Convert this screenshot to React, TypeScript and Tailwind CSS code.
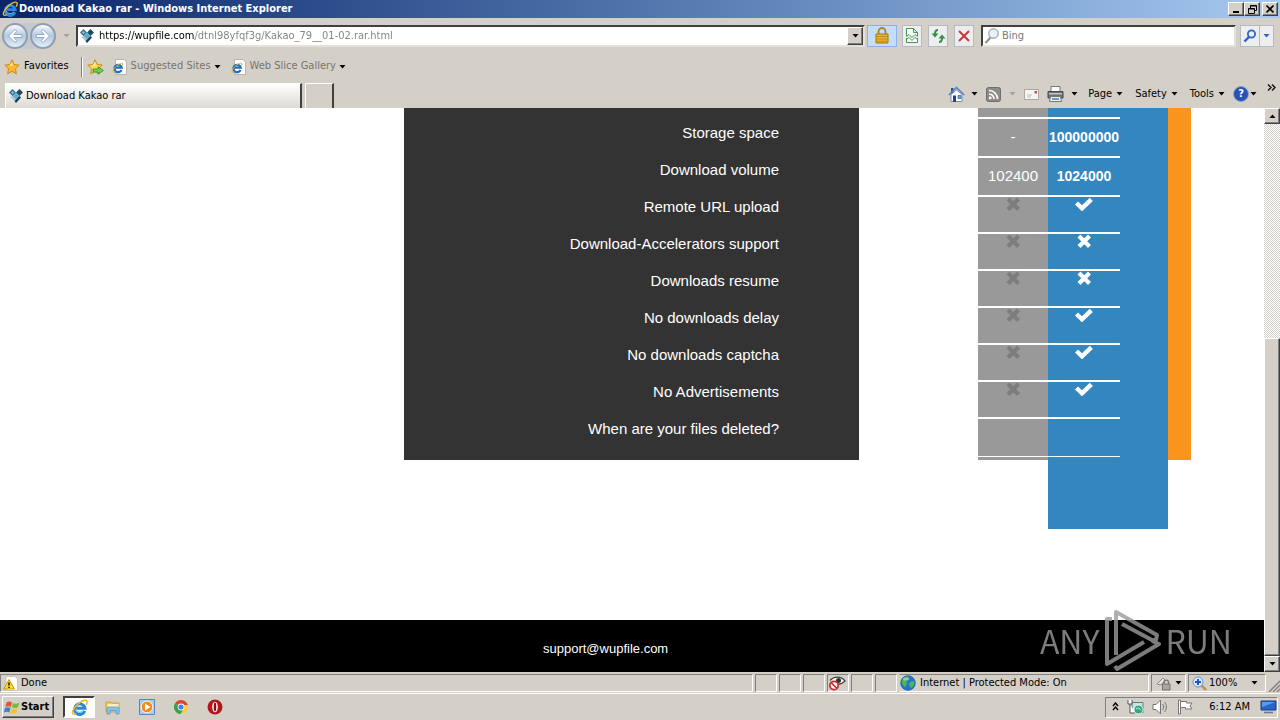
import React, { useState } from "react";

interface PlanRow {
  label: string;
  free: string | boolean;
  premium: string | boolean;
}

const rows: PlanRow[] = [
  { label: "Storage space", free: "-", premium: "100000000" },
  { label: "Download volume", free: "102400", premium: "1024000" },
  { label: "Remote URL upload", free: false, premium: true },
  { label: "Download-Accelerators support", free: false, premium: false },
  { label: "Downloads resume", free: false, premium: false },
  { label: "No downloads delay", free: false, premium: true },
  { label: "No downloads captcha", free: false, premium: true },
  { label: "No Advertisements", free: false, premium: true },
  { label: "When are your files deleted?", free: "", premium: "" },
];

const raised =
  "border border-t-white border-l-white border-r-[#404040] border-b-[#404040] bg-[#d4d0c8] shadow-[inset_-1px_-1px_0_#808080]";
const sunken =
  "border border-t-[#808080] border-l-[#808080] border-r-white border-b-white";

function IeIcon({ size = 16 }: { size?: number }) {
  return (
    <svg width={size} height={size} viewBox="0 0 16 16" fill="none">
      <path
        d="M13 11.2A5 5 0 1 1 13.2 8.6H5"
        stroke="#2b86dc"
        strokeWidth="2.8"
      />
      <path
        d="M12 10.5A4.6 4.6 0 0 1 4 10"
        stroke="#6cc4f6"
        strokeWidth="1"
      />
      <path
        d="M14.2 5.6C15.8 2.6 15.6.9 13.2 1.1 9.4 1.4 3.4 6.8 1.6 11.4.8 13.900 1.900 15.200 4.800 13.700"
        stroke="#f0b822"
        strokeWidth="1.4"
      />
    </svg>
  );
}

function IePage() {
  return (
    <svg width="16" height="16" viewBox="0 0 16 16" fill="none">
      <path d="M3.5.5H12l2.500 2.500v12.500h-11z" fill="#fff" stroke="#b9b5ab" />
      <path
        d="M9.500 11A3.700 3.700 0 1 1 9.700 8.600H3.500"
        stroke="#1c6fc4"
        strokeWidth="2.2"
      />
      <path d="M10.500 6.500c1-2.500 0-2.800-2-2C5 6 1.500 9.500 1 12c0 1.500 1 1.500 2.500 1" stroke="#e8b32a" />
    </svg>
  );
}

// wupfile diamond mark
function SiteIcon() {
  return (
    <svg width="16" height="16" viewBox="0 0 16 16">
      <path d="M4.500 1 8 4.500 4.500 8 1 4.500z" fill="#35718f" />
      <path d="M11.500 1 15 4.500 11.500 8 8 4.500z" fill="#1f4a63" />
      <path d="M8 4.500 11.500 8 8 11.500 4.500 8z" fill="#5bb0d0" />
      <path d="M4.500 8 8 11.500 6.500 13 2.500 9z" fill="#a9c4d2" />
      <path d="M11.500 8 13 9.500 8 15 6.500 13z" fill="#173b52" />
      <path d="M4.500 3 6 4.500 4.500 6 3 4.500z" fill="#9fc6d8" />
    </svg>
  );
}

function Caret({ className = "text-black" }: { className?: string }) {
  return (
    <svg width="7" height="4" viewBox="0 0 7 4" className={`shrink-0 ${className}`}>
      <path d="M.5 0h6L3.500 3.500z" fill="currentColor" />
    </svg>
  );
}

function Star({ add = false }: { add?: boolean }) {
  return (
    <svg width="17" height="16" viewBox="0 0 17 16">
      <path
        d="m8 .8 2.100 4.700 5.100.6-3.700 3.500.9 5.200L8 12.300l-4.400 2.500.9-5.200L.8 6.100l5.100-.6z"
        fill={add ? "#f8dc5a" : "#fbb62c"}
        stroke="#cf8a12"
      />
      <path d="M8 3 9 6.500 5 7z" fill="#ffeaa0" />
      {add && (
        <path
          d="M6 10h5V7.800l5.300 3.700-5.300 3.700V13H6z"
          fill="#67d64b"
          stroke="#2c8a1d"
          strokeWidth=".8"
        />
      )}
    </svg>
  );
}

function NavCircle({ forward = false }: { forward?: boolean }) {
  return (
    <button
      aria-label={forward ? "Forward" : "Back"}
      className="flex size-[26px] items-center justify-center rounded-full border-2 border-[#8f9dae] bg-linear-to-b from-[#f6f9fc] via-[#b4c8df] to-[#e3f0fb]"
    >
      <svg
        width="16"
        height="16"
        viewBox="0 0 16 16"
        className={forward ? "rotate-180" : ""}
      >
        <path
          d="M8 1.500 1.500 8 8 14.500l1.800-1.900L6.800 9.500h8v-3h-8l3-3.100z"
          fill="#fff"
          stroke="#8aa3c2"
          strokeWidth=".9"
        />
      </svg>
    </button>
  );
}

function Mark({ on, className }: { on: boolean; className: string }) {
  return (
    <svg
      width="18"
      height="14"
      viewBox="0 0 18 14"
      fill="none"
      stroke="currentColor"
      className={`mx-auto block ${className}`}
    >
      {on ? (
        <path d="M1.500 6 7 11.300 16.300 2.300" strokeWidth="4.400" />
      ) : (
        <path d="M4 2 14.500 12.500M14.500 2 4 12.500" strokeWidth="4.200" />
      )}
    </svg>
  );
}

function Cell({ value, dim }: { value: string | boolean; dim?: boolean }) {
  if (typeof value === "string") return <>{value}</>;
  return <Mark on={value} className={dim ? "text-[#7d7d7d]" : "text-white"} />;
}

function TitleBar() {
  return (
    <header className="flex h-[18px] shrink-0 items-center bg-linear-to-r from-[#0a246a] to-[#a6caf0] pr-0.5 pl-0.5">
      <IeIcon />
      <h1 className="ml-px flex-1 text-[11px] font-bold text-white">
        Download Kakao rar - Windows Internet Explorer
      </h1>
      <div className="flex">
        <button aria-label="Minimize" className={`flex h-3.5 w-4 items-end justify-center pb-0.5 ${raised}`}>
          <span className="h-0.5 w-1.5 bg-black" />
        </button>
        <button aria-label="Restore" className={`flex h-3.5 w-4 items-center justify-center ${raised}`}>
          <svg width="9" height="9" viewBox="0 0 9 9" fill="none" stroke="#000">
            <path d="M2.500 3V.5h6v5H6.500M2.500 1h6" />
            <path d="M.5 3.500h6v5h-6zM.5 4h6" />
          </svg>
        </button>
        <button aria-label="Close" className={`ml-0.5 flex h-3.5 w-4 items-center justify-center ${raised}`}>
          <svg width="8" height="8" viewBox="0 0 8 8" stroke="#000" strokeWidth="1.6">
            <path d="m.5.5 7 7m0-7-7 7" />
          </svg>
        </button>
      </div>
    </header>
  );
}

const toolButton =
  "flex h-[22px] w-5 items-center justify-center border border-[#b5b9c2] bg-[#eceef0]";

function AddressBar() {
  const [url, setUrl] = useState(
    "https://wupfile.com/dtnl98yfqf3g/Kakao_79__01-02.rar.html"
  );
  const [query, setQuery] = useState("");

  return (
    <div className="flex h-[35px] shrink-0 items-center pr-1.5 pl-0.5">
      <div className="flex gap-0.5 rounded-full bg-[#c5c8d0]">
        <NavCircle />
        <NavCircle forward />
      </div>
      <button aria-label="Recent pages" className="flex w-5 justify-center">
        <Caret className="text-[#a5a198]" />
      </button>
      <div className="flex h-[22px] flex-1 items-center border-2 border-t-[#404040] border-l-[#404040] border-r-[#e4e1da] border-b-[#e4e1da] bg-white pl-px">
        <SiteIcon />
        <input
          aria-label="Address"
          value={url}
          onChange={(e) => setUrl(e.target.value)}
          className="ml-1 min-w-0 flex-1 bg-[linear-gradient(90deg,#000_96px,#808080_96px)] bg-clip-text pt-px text-[11px] text-transparent caret-black outline-none"
        />
        <button aria-label="Show address list" className={`flex h-[18px] w-4 items-center justify-center ${raised}`}>
          <Caret />
        </button>
      </div>
      <button
        aria-label="Security report"
        className="ml-0.5 flex h-[22px] w-[30px] items-center justify-center border border-[#8fb0e6] bg-[#c6dcfb]"
      >
        <svg width="16" height="17" viewBox="0 0 16 17">
          <path d="M4.500 8V4.500a3.500 3.500 0 0 1 7 0V8" fill="none" stroke="#a98325" strokeWidth="1.8" />
          <path d="M2 7h12v9H2z" fill="#efb62c" stroke="#9b7415" />
          <path d="M2.500 9.500h11M2.500 12h11M2.500 14.200h11" stroke="#b8861a" strokeWidth=".9" />
        </svg>
      </button>
      <div className="ml-[5px] flex gap-1.5">
        <button aria-label="Compatibility view" className={toolButton}>
          <svg width="12" height="15" viewBox="0 0 12 15" fill="none" stroke="#3f9a4b">
            <path d="M.5 8V.5h7l4 4V8M.5 10v4.500h11V10M7.500.5v4h4" fill="#fff" />
            <path d="m.5 8.500 2.500-2 3 3 3-3 2.500 2M.5 11.500l2.500-2 3 3 3-3 2.500 2" />
          </svg>
        </button>
        <button aria-label="Refresh" className={toolButton}>
          <svg width="15" height="14" viewBox="0 0 15 14" fill="none">
            <path d="M7 1C4.500 1 4 2.500 4 5" stroke="#35923c" strokeWidth="2" />
            <path d="M.5 4.500h7L4 8.500z" fill="#35923c" />
            <path d="M8 13c2.500 0 3-1.500 3-4" stroke="#35923c" strokeWidth="2" />
            <path d="M7.500 9.500h7L11 5.500z" fill="#35923c" />
          </svg>
        </button>
        <button aria-label="Stop" className={toolButton}>
          <svg width="12" height="12" viewBox="0 0 12 12" stroke="#c8373a" strokeWidth="2">
            <path d="m1 1 10 10M11 1 1 11" />
          </svg>
        </button>
      </div>
      <div className="ml-[7px] flex h-[22px] w-[255px] items-center border-2 border-t-[#404040] border-l-[#404040] border-r-[#e4e1da] border-b-[#e4e1da] bg-white pl-px">
        <svg width="16" height="16" viewBox="0 0 16 16" fill="none">
          <path d="M6.500 9.500 1.500 15" stroke="#8c8c94" strokeWidth="2" />
          <circle cx="9.5" cy="5.5" r="4.7" fill="#e6f2fb" stroke="#a7acb8" strokeWidth="1.4" />
        </svg>
        <input
          type="search"
          aria-label="Search"
          placeholder="Bing"
          value={query}
          onChange={(e) => setQuery(e.target.value)}
          className="ml-0.5 min-w-0 flex-1 pt-px text-[11px] outline-none placeholder:text-[#77777c]"
        />
      </div>
      <div className="ml-1 flex">
        <button aria-label="Go" className={toolButton}>
          <svg width="14" height="14" viewBox="0 0 14 14" fill="none" stroke="#2f62c9">
            <circle cx="8.5" cy="5" r="3.6" strokeWidth="1.8" />
            <path d="M6 7.800 1.500 12.500" strokeWidth="2.4" />
          </svg>
        </button>
        <button
          aria-label="Search options"
          className="flex h-[22px] w-3.5 items-center justify-center border border-l-0 border-[#b5b9c2] bg-[#eceef0]"
        >
          <Caret className="text-[#2f62c9]" />
        </button>
      </div>
    </div>
  );
}

function FavoritesBar() {
  return (
    <div className="flex h-[27px] shrink-0 items-center pl-1 text-[11px]">
      <button className="flex items-center gap-[3px] pr-3">
        <Star />
        Favorites
      </button>
      <span className="h-5 w-0.5 border-l border-[#808080] bg-white" />
      <button aria-label="Add to favorites bar" className="ml-1">
        <Star add />
      </button>
      <button className="ml-2 flex items-center gap-[3px] text-[#77746d]">
        <IePage />
        Suggested Sites
        <Caret />
      </button>
      <button className="ml-2.5 flex items-center gap-[3px] text-[#77746d]">
        <IePage />
        Web Slice Gallery
        <Caret />
      </button>
    </div>
  );
}

function CommandBar() {
  return (
    <div className="flex h-7 items-center text-[11px]">
      <button aria-label="Home" className="flex items-center gap-1.5">
        <svg width="17" height="17" viewBox="0 0 17 17">
          <path d="M3 8.500v7h11v-7L8.500 4z" fill="#fff" stroke="#7590b8" />
          <path d="M3 2h2.500v4L3 8z" fill="#2f4f9c" />
          <path d="m.8 9 7.700-7.500L16.200 9" fill="none" stroke="#5a7fc0" strokeWidth="1.6" />
          <path d="M5 9.500h3V16H5z" fill="#2b3f80" />
          <path d="M10 9.500h3v3h-3z" fill="#53b6d8" stroke="#2d5b96" strokeWidth=".7" />
        </svg>
        <Caret />
      </button>
      <button aria-label="Feeds" className="ml-2 flex items-center gap-2">
        <svg width="15" height="15" viewBox="0 0 15 15" fill="none">
          <rect x=".5" y=".5" width="14" height="14" rx="2" fill="#8d8b88" stroke="#6f6d6a" />
          <path d="M3 3.500A8.500 8.500 0 0 1 11.500 12M3 7a5 5 0 0 1 5 5" stroke="#fff" strokeWidth="1.7" />
          <circle cx="4.2" cy="10.9" r="1.4" fill="#fff" />
        </svg>
        <Caret className="text-[#a5a198]" />
      </button>
      <button aria-label="Read mail" className="ml-2">
        <svg width="15" height="11" viewBox="0 0 15 11">
          <path d="M.5.5h14v10H.5z" fill="#f6f5f3" stroke="#aaa6a0" />
          <path d="M10.500 2h2.500v2.500h-2.500z" fill="#c0504d" />
          <path d="M3 6h5M3 8h4" stroke="#c2bfba" />
        </svg>
      </button>
      <button aria-label="Print" className="ml-2 flex items-center gap-[7px]">
        <svg width="17" height="16" viewBox="0 0 17 16">
          <path d="M4 .5h9V6H4z" fill="#fff" stroke="#777" />
          <path d="M1 5.500h15v6.500H1z" fill="#6f7072" stroke="#4b4b4d" />
          <path d="M2 7h13v1.500H2z" fill="#c5c5c7" />
          <path d="M3.500 10.500h10l1 5h-12z" fill="#eee" stroke="#777" />
          <path d="M5 13h7" stroke="#3f7ec0" strokeWidth="1.5" />
        </svg>
        <Caret />
      </button>
      <button className="ml-2.5 flex items-center gap-1">
        Page
        <Caret />
      </button>
      <button className="ml-3 flex items-center gap-1">
        Safety
        <Caret />
      </button>
      <button className="ml-3 flex items-center gap-1">
        Tools
        <Caret />
      </button>
      <button aria-label="Help" className="ml-2 flex items-center gap-px">
        <span className="flex size-4 items-center justify-center rounded-full border border-[#8fa3c8] bg-[#2753b5] text-[11px] font-bold text-white">
          ?
        </span>
        <Caret />
      </button>
      <button aria-label="More" className="ml-2.5 self-start pt-1 pr-1 text-[#111]">
        <svg width="9" height="7" viewBox="0 0 9 7" fill="none" stroke="currentColor" strokeWidth="1.4">
          <path d="m1 .5 3 3-3 3M5 .5l3 3-3 3" />
        </svg>
      </button>
    </div>
  );
}

function TabRow() {
  return (
    <div className="flex h-7 shrink-0 items-end justify-between pl-[5px]">
      <div className="flex gap-[3px]">
        <button className="flex h-[25px] w-[297px] items-center gap-0.5 border-t border-r-2 border-l border-t-white border-r-[#404040] border-l-white bg-linear-to-b from-white to-[#dedad4] pl-0.5 text-[11px]">
          <SiteIcon />
          Download Kakao rar
        </button>
        <button
          aria-label="New tab"
          className="h-[25px] w-[29px] border-t border-r-2 border-l border-t-white border-r-[#404040] border-l-white"
        />
      </div>
      <CommandBar />
    </div>
  );
}

function PlanComparison() {
  return (
    <section className="flex h-[512px] shrink-0 items-start justify-end gap-[119px] pr-[73px] font-['Liberation_Sans',Arial,sans-serif] text-[15px] text-white">
      <ul className="w-[455px] bg-[#333] pt-1.5 pr-20 pb-[13px] text-right">
        {rows.map((row) => (
          <li key={row.label} className="h-[37px] leading-[37px]">
            {row.label}
          </li>
        ))}
      </ul>
      <div className="grid">
        <div className="col-start-1 row-start-1 flex items-start">
          <div className="h-[352px] w-[70px] bg-[#999]" />
          <div className="h-[421px] w-[120px] bg-[#3486be]" />
          <div className="h-[352px] w-[23px] bg-[#fa941d]" />
        </div>
        <table className="col-start-1 row-start-1 w-[142px] table-fixed border-collapse self-start text-center">
          <tbody>
            <tr className="h-2.5 border-b-2 border-white">
              <td className="w-[70px] p-0" />
              <td className="w-[72px] p-0" />
            </tr>
            {rows.map((row) => (
              <tr
                key={row.label}
                className={
                  typeof row.free === "boolean"
                    ? "h-[37px] border-b-2 border-white align-top"
                    : row.free
                      ? "h-[39px] border-b-2 border-white align-middle"
                      : "h-[38px] border-b border-white"
                }
              >
                <td className="p-0">
                  <Cell value={row.free} dim />
                </td>
                <td className="p-0 text-[14px] font-bold">
                  <Cell value={row.premium} />
                </td>
              </tr>
            ))}
          </tbody>
        </table>
      </div>
    </section>
  );
}

function Watermark() {
  return (
    <div className="pointer-events-none absolute right-12 bottom-0 flex items-center gap-1 font-['Noto_Sans_CJK_SC',sans-serif] text-[32px] leading-[64px] text-[#9c9c9c] opacity-80">
      <span>ANY</span>
      <svg
        width="58"
        height="64"
        viewBox="0 0 58 64"
        fill="none"
        stroke="currentColor"
        strokeWidth="4"
        strokeLinejoin="round"
      >
        <path d="M9 11H4v45l37-22" />
        <path d="M13 47V4l41 23-1 5h-4L19 16" />
        <path d="m49 33 7 3-42 25-2-3" />
      </svg>
      <span>RUN</span>
    </div>
  );
}

function ScrollBar() {
  return (
    <div className="flex w-4 shrink-0 flex-col bg-[repeating-conic-gradient(#fff_0_25%,#d4d0c8_0_50%)] bg-size-[2px_2px]">
      <button aria-label="Scroll up" className={`flex h-4 items-center justify-center ${raised}`}>
        <Caret className="rotate-180" />
      </button>
      <div className="grow-[215] basis-0" />
      <div className={`grow-[317] basis-0 ${raised}`} />
      <button aria-label="Scroll down" className={`flex h-4 items-center justify-center ${raised}`}>
        <Caret />
      </button>
    </div>
  );
}

function StatusBar() {
  return (
    <div className="flex h-[22px] shrink-0 gap-0.5 border-b border-white pt-0.5 pb-px text-[11px]">
      <div className={`flex flex-1 items-center gap-[3px] pl-0.5 ${sunken}`}>
        <svg width="15" height="15" viewBox="0 0 15 15">
          <path d="M3 .5h9l2.500 2.500v11.500H3z" fill="#fff" stroke="#c9c6c0" />
          <path d="M6 3.500 11.500 13H.7z" fill="#fbdc1e" stroke="#c09a10" />
          <path d="M6 6.500v3M6 10.700v1.300" stroke="#000" strokeWidth="1.4" />
        </svg>
        Done
      </div>
      <div className={`w-[22px] ${sunken}`} />
      <div className={`w-[22px] ${sunken}`} />
      <div className={`w-[22px] ${sunken}`} />
      <div className={`w-[22px] ${sunken}`}>
        <svg width="18" height="16" viewBox="0 0 18 16" fill="none">
          <path d="M2 5.500C6 1 13 1 17 6c-4 4-9 4-12 2" fill="#fff" stroke="#444" strokeWidth="1.3" />
          <circle cx="10.5" cy="5.5" r="2.5" fill="#333" />
          <circle cx="6" cy="10.5" r="4.2" fill="#fff" stroke="#cf2a2a" strokeWidth="1.7" />
          <path d="m3 7.500 6 6" stroke="#cf2a2a" strokeWidth="1.7" />
        </svg>
      </div>
      <div className={`w-[22px] ${sunken}`} />
      <div className={`w-[22px] ${sunken}`} />
      <div className="flex w-[250px] items-center gap-1 border border-t-[#808080] border-r-white border-b-white border-l-transparent">
        <svg width="16" height="16" viewBox="0 0 16 16">
          <circle cx="8" cy="8" r="7.3" fill="#2674d2" stroke="#1b4d93" strokeWidth=".7" />
          <path d="M3 4c2-3 5-3 6-2L8 5 6 6l1 3-2 3C2 10 1 7 3 4z" fill="#4fba4c" />
          <path d="m10 7 4-1c1 3-1 6-3 7l-2-3z" fill="#4fba4c" />
          <ellipse cx="6" cy="4" rx="3" ry="1.5" fill="#fff" opacity=".4" />
        </svg>
        Internet | Protected Mode: On
      </div>
      <button aria-label="Protected mode" className={`flex w-[35px] items-center gap-1 pl-1 ${sunken}`}>
        <svg width="15" height="15" viewBox="0 0 15 15" fill="none">
          <path d="M1 8 7 2l2 2-4 5z" fill="#e8e6e2" stroke="#8c8984" />
          <path d="M8 8V6.500a2.300 2.300 0 0 1 4.600 0V8" stroke="#77746f" strokeWidth="1.3" />
          <path d="M6.500 8h7.500v6H6.500z" fill="#aaa7a2" stroke="#77746f" />
        </svg>
        <Caret />
      </button>
      <button className={`flex w-[78px] items-center gap-0.5 pl-[3px] ${sunken}`}>
        <svg width="15" height="15" viewBox="0 0 15 15" fill="none">
          <path d="m9 9 5 5" stroke="#c58b45" strokeWidth="2.4" />
          <circle cx="6" cy="6" r="5" fill="#d8ecff" stroke="#6d93c8" />
          <path d="M3 6h6M6 3v6" stroke="#1d57c4" strokeWidth="2" />
        </svg>
        100%
        <span className="ml-3">
          <Caret />
        </span>
      </button>
      <svg width="12" height="12" viewBox="0 0 12 12" className="self-end" stroke="#808080">
        <path d="M1 12 12 1M5 12l7-7M9 12l3-3" strokeWidth="1.4" />
      </svg>
    </div>
  );
}

function Taskbar() {
  return (
    <footer className="flex h-[26px] shrink-0 items-center pr-0.5 pl-0.5 text-[11px]">
      <button className={`flex h-[22px] w-[52px] items-center gap-px pl-px font-bold ${raised}`}>
        <svg width="16" height="15" viewBox="0 0 16 15">
          <path d="M2.500 2.500c2-1.500 4-1 5.500 0L6.800 7C5.300 6 3.500 5.800 1.200 7z" fill="#e4572c" />
          <path d="M9 3c2 1 4 1 6.500-.5L14 7.200C12 8.300 10 8.400 7.800 7.300z" fill="#7cb93c" />
          <path d="M1 8c2-1.200 4-1 5.500 0L5.300 12.500C3.800 11.500 2 11.300-.2 12.500z" fill="#3d7fd6" />
          <path d="M7.500 8.500c2 1 4 1 6.200-.3l-1.300 4.500c-2 1.200-4 1.200-6.100.3z" fill="#f6c32c" />
        </svg>
        Start
      </button>
      <button
        aria-label="Internet Explorer"
        className="ml-[9px] flex h-[22px] w-8 items-center justify-center border-2 border-t-[#404040] border-l-[#404040] border-r-white border-b-white bg-white"
      >
        <IeIcon size={17} />
      </button>
      <div className="ml-2.5 flex items-center gap-[18px]">
        <button aria-label="Windows Explorer">
          <svg width="16" height="16" viewBox="0 0 16 16">
            <path d="M1 3h5l1 1h7v9H1z" fill="#eec75c" stroke="#c79a35" strokeWidth=".8" />
            <path d="M2.500 5h11v4h-11z" fill="#fdf0b4" />
            <path d="M2 9.500C2 8 3 8 4 8h8c1 0 2 0 2 1.500V15h-3v-3.500H5V15H2z" fill="#85c4ec" stroke="#5495c4" strokeWidth=".7" />
          </svg>
        </button>
        <button aria-label="Media Player">
          <svg width="16" height="16" viewBox="0 0 16 16">
            <path d="M.5.5h15v15H.5z" fill="#a9cdf2" stroke="#5486c0" />
            <circle cx="8" cy="8" r="5.8" fill="#f58a1f" stroke="#fff" strokeWidth=".8" />
            <path d="M6 4.500 11.500 8 6 11.500z" fill="#fff" />
          </svg>
        </button>
        <button aria-label="Chrome">
          <svg width="16" height="16" viewBox="0 0 16 16">
            <circle cx="8" cy="8" r="7" fill="#f9cf35" />
            <path d="M8 8 1.900 4.500a7 7 0 0 1 12.200 0L15 6H8z" fill="#dc4437" />
            <path d="M8 8 1.900 4.500A7 7 0 0 0 7.500 15L11 9z" fill="#2da357" />
            <circle cx="8" cy="8" r="3.4" fill="#fff" />
            <circle cx="8" cy="8" r="2.6" fill="#4382ee" />
          </svg>
        </button>
        <button aria-label="Opera">
          <svg width="16" height="16" viewBox="0 0 16 16">
            <circle cx="8" cy="8" r="7.5" fill="#b3161c" />
            <ellipse cx="8" cy="8" rx="2.8" ry="5.2" fill="#fff" />
            <ellipse cx="8" cy="8" rx="1.3" ry="4.4" fill="#8f0d12" />
          </svg>
        </button>
      </div>
      <div className={`ml-auto flex h-[21px] items-center gap-2 pl-1.5 ${sunken}`}>
        <button aria-label="Show hidden icons" className="self-start pt-1">
          <svg width="7" height="9" viewBox="0 0 7 9" fill="none" stroke="#000" strokeWidth="1.4">
            <path d="m1 4 2.500-3L6 4M1 8l2.500-3L6 8" />
          </svg>
        </button>
        <svg width="17" height="17" viewBox="0 0 17 17">
          <path d="M5 3.500h11v10H5z" fill="#bfe6e0" stroke="#587f88" />
          <path d="M1 1v4h4V1M3 5v9h5" fill="#fff" stroke="#555" />
          <circle cx="11.5" cy="10.5" r="4.5" fill="#39a783" stroke="#fff" strokeWidth=".8" />
          <path d="M9 10c2-2 4 0 5 1" fill="none" stroke="#d8f5e8" />
        </svg>
        <svg width="17" height="16" viewBox="0 0 17 16" fill="none" stroke="#77746f">
          <path d="M1 5.500h3L8.500 1v14L4 10.500H1z" fill="#fff" />
          <path d="M10.500 5c1.500 2 1.500 4 0 6M12.500 3c2.500 3 2.500 7 0 10" />
        </svg>
        <svg width="16" height="16" viewBox="0 0 16 16" stroke="#77746f">
          <path d="M1.500 1h2v14h-2z" fill="#fff" />
          <path d="M3.500 2.500h6V4H15l-2 3 2 3H8.500V8.500h-5z" fill="#fff" />
        </svg>
        <time className="ml-2">6:12 AM</time>
        <button aria-label="Show desktop" className="ml-0.5">
          <svg width="17" height="14" viewBox="0 0 17 14">
            <path d="M1 1h15v9H1z" fill="#2666cc" stroke="#1b3f7c" />
            <path d="M2 2h13L2 7z" fill="#5c9aec" />
            <path d="M4 12.500h9" stroke="#6b7890" strokeWidth="1.6" />
          </svg>
        </button>
      </div>
    </footer>
  );
}

export default function App() {
  return (
    <div className="flex h-screen flex-col overflow-hidden bg-[#d4d0c8] font-['DejaVu_Sans_Condensed',Tahoma,sans-serif] text-black">
      <TitleBar />
      <AddressBar />
      <FavoritesBar />
      <TabRow />
      <div className="relative flex min-h-0 flex-1">
        <main className="flex min-w-0 flex-1 flex-col overflow-hidden bg-white">
          <PlanComparison />
          <div className="flex flex-1 flex-col bg-black pt-[18px] pl-[543px] font-['Liberation_Sans',Arial,sans-serif] text-[13px] leading-[22px] text-white">
            <a href="mailto:support@wupfile.com">support@wupfile.com</a>
          </div>
        </main>
        <ScrollBar />
        <Watermark />
      </div>
      <StatusBar />
      <Taskbar />
    </div>
  );
}
